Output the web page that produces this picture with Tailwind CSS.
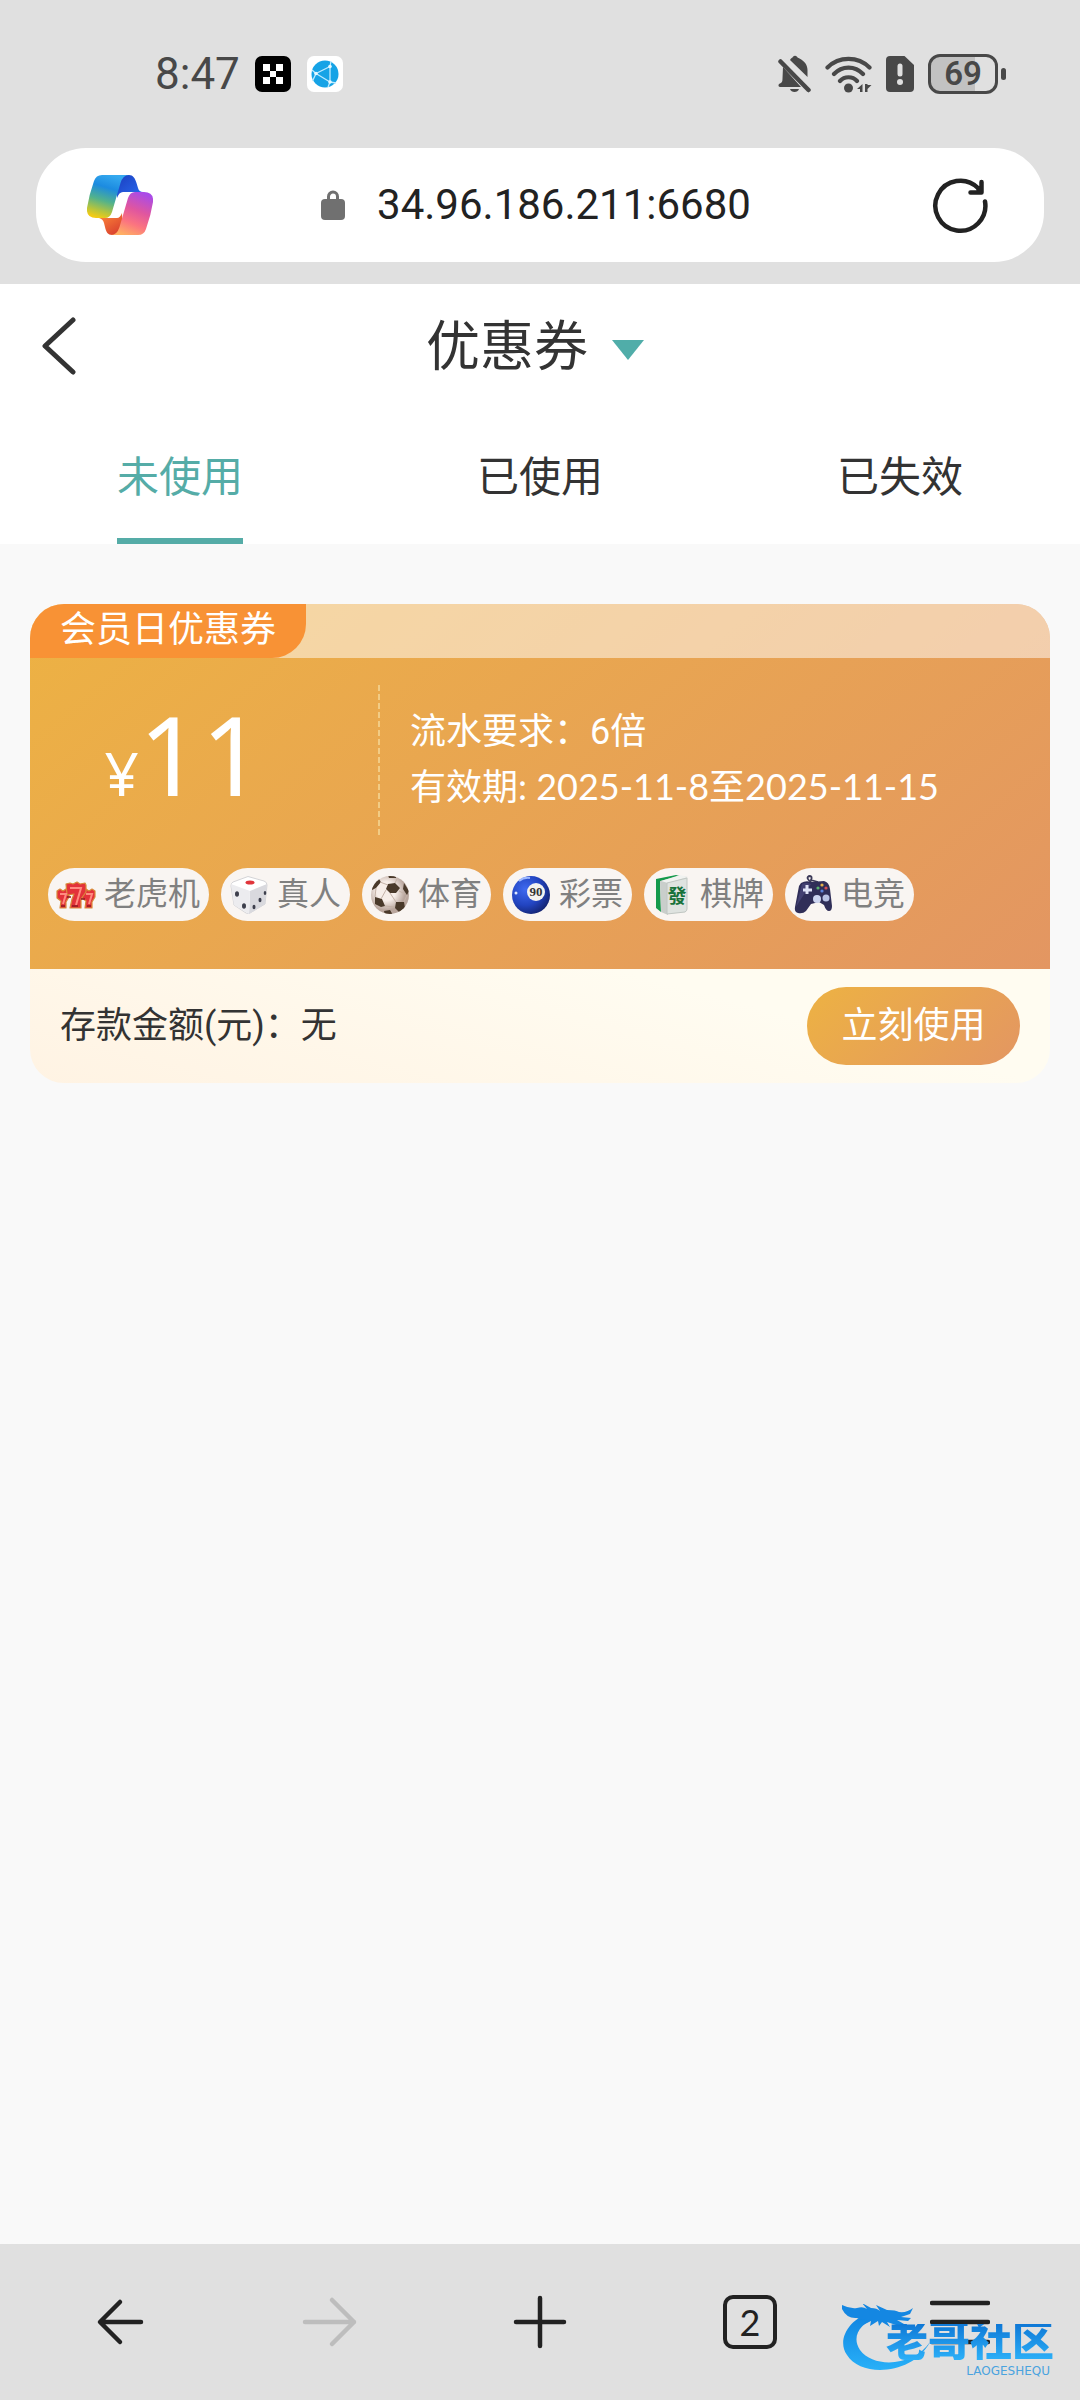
<!DOCTYPE html>
<html lang="zh-CN">
<head>
<meta charset="utf-8">
<meta name="viewport" content="width=device-width, initial-scale=1">
<title>优惠券</title>
<script src="https://cdn.jsdelivr.net/npm/@tailwindcss/browser@4"></script>
</head>
<body class="flex min-h-screen flex-col bg-[#f9f9f9] font-[Roboto,'Noto_Sans_CJK_SC',sans-serif] text-[#333]">

<!-- Status bar and address bar -->
<div class="bg-[#e0e0e0] px-9 pb-[22px]">
  <div class="flex h-[148px] items-center justify-between pr-[38px] pl-[119px]">
    <div class="flex items-center gap-4">
      <span class="w-[84px] text-[44px] leading-[52px] text-[#484848]">8:47</span>
      <svg class="size-9" viewBox="0 0 36 36"><rect width="36" height="36" rx="7"/><path fill="#fff" d="M8 8h7v7H8zM21 8h7v7h-7zM15 15h6v6h-6zM8 21h7v7H8zM21 21h7v7h-7z"/></svg>
      <svg class="size-9" viewBox="0 0 36 36"><rect width="36" height="36" rx="7" fill="#fff"/><circle cx="18" cy="18" r="13.5" fill="#16a3e6"/><path d="M9 17.5 23 10.500M9 17.500 23 26M23 10.500V26M9 17.500 5 14M9 17.500 5.500 25M23 10.500 24 5M23 26 21 31M23 26l6 1" fill="none" stroke="#bdeaff" stroke-width="1.300"/><circle cx="9" cy="17.500" r="1.800" fill="#e6f8ff"/><circle cx="23" cy="10.500" r="1.800" fill="#e6f8ff"/><circle cx="23" cy="26" r="1.800" fill="#e6f8ff"/></svg>
    </div>
    <div class="flex items-center gap-[14px] text-[#484848]">
      <svg class="h-[38px] w-[33px]" viewBox="0 0 33 38" fill="currentColor"><path d="M12 5c1-2 2.500-2 3-3.200 1-1.500 3-1.500 4 0 .5 1 1 1 2.500 1.800 5 2.500 8 6.500 8 11.500v7z"/><path d="M5 12l18 20H2c-2 0-2-3 0-3.500 2-1 2.500-2 2.500-5z"/><path d="M2.500 6.500 30.500 35" stroke="currentColor" stroke-width="4.500" stroke-linecap="round"/><path d="M12 34h9c-1 4-8 4-9 0z"/></svg>
      <svg class="h-[38px] w-[47px]" viewBox="0 0 47 38" fill="none" stroke="currentColor" stroke-width="4.200" stroke-linecap="round"><path d="M2.500 12.500C14 1 33 1 44.500 12.500M9 19c8-8.500 21-8.500 29 0M15 26c4.500-5 12.500-5 17 0"/><circle cx="23.500" cy="33" r="4.500" fill="currentColor" stroke="none"/><path d="M37.500 29v8h-2.500v-3h-3zM40 29v8h2.500v-3l4-4h-4v-1z" fill="currentColor" stroke="none"/></svg>
      <svg class="h-[38px] w-7" viewBox="0 0 28 38"><path fill="currentColor" d="M4 1h14.500L28 10v23q0 4-4 4H4q-4 0-4-4V5q0-4 4-4z"/><path stroke="#e0e0e0" stroke-width="5" stroke-linecap="round" d="M14 11v8"/><circle cx="14" cy="27" r="3" fill="#e0e0e0"/></svg>
      <div class="flex items-center gap-[3px]">
        <div class="h-10 w-[70px] rounded-xl border-[3px] border-current bg-[linear-gradient(90deg,#c2c2c2_68%,#e0e0e0_68%)] text-center text-[33px] leading-[34px] font-semibold">69</div>
        <div class="h-3 w-[5px] rounded-full bg-current"></div>
      </div>
    </div>
  </div>

  <form class="flex h-[114px] items-center rounded-[50px] bg-white px-12">
    <button type="button" aria-label="Copilot" class="flex w-[72px] justify-center">
      <svg class="h-[60px] w-[66px]" viewBox="0 0 66 60">
        <defs>
          <linearGradient id="a" x1=".6" y1="0" x2=".3" y2="1"><stop stop-color="#35a9ef"/><stop offset=".3" stop-color="#1c8be0"/><stop offset=".6" stop-color="#52b28c"/><stop offset=".85" stop-color="#b9c53a"/><stop offset="1" stop-color="#f3cb14"/></linearGradient>
          <linearGradient id="b" x1=".7" y1="0" x2=".3" y2="1"><stop stop-color="#a94be8"/><stop offset=".4" stop-color="#e0569f"/><stop offset=".7" stop-color="#fb7480"/><stop offset="1" stop-color="#ffb063"/></linearGradient>
          <linearGradient id="c" x1="0" y1="0" x2="1" y2="1"><stop stop-color="#1b3fc0"/><stop offset="1" stop-color="#2a6cf0"/></linearGradient>
          <linearGradient id="d" x1="0" y1="0" x2=".7" y2="1"><stop stop-color="#ff8c3a"/><stop offset="1" stop-color="#d9402f"/></linearGradient>
        </defs>
        <path fill="url(#c)" d="M30 0h12c4 0 6 3 7.500 8l1.500 5q1 4 5 4H36q-4 0-6 6z"/>
        <path fill="url(#d)" d="M36 60H25c-4 0-6-3-7-8l-1-4q-1-4-5-5h18q3 0 5-5z"/>
        <path fill="url(#a)" d="M15 0h27q-6 0-8.500 8L25 37q-2 6-7 6H9Q-1 43 0 33 2 20 7 6q2-6 8-6z"/>
        <path fill="url(#b)" d="M51 60H24q6 0 8.500-8L41 23q2-6 7-6h9q10 0 9 10-2 13-7 27-2 6-8 6z"/>
      </svg>
    </button>
    <label class="flex flex-1 items-center justify-center gap-8 pr-2">
      <svg class="h-[30px] w-6" viewBox="0 0 24 30" role="img" aria-label="网址"><rect y="9" width="24" height="21" rx="4" fill="#707070"/><path d="M7.500 10V6.500a4.500 4.500 0 0 1 9 0V10" fill="none" stroke="#707070" stroke-width="3"/></svg>
      <input type="text" value="34.96.186.211:6680" class="field-sizing-content text-[42px] leading-[50px] text-[#222] outline-none">
    </label>
    <button type="button" aria-label="刷新" class="flex w-[72px] justify-center">
      <svg class="size-[58px]" viewBox="0 0 58 58" fill="none" stroke="#222" stroke-width="4.500" stroke-linecap="round" stroke-linejoin="round"><path d="M54 25.500A25 25 0 1 1 47 12l2 4.500M50.500 6v10.500H39.500"/></svg>
    </button>
  </form>
</div>

<!-- Page header -->
<header class="bg-white">
  <div class="grid h-[124px] grid-cols-[80px_1fr_90px] items-center">
    <button type="button" aria-label="返回" class="flex justify-end pr-[3px]">
      <svg class="h-[58px] w-9" viewBox="0 0 36 58" fill="none" stroke="#333" stroke-width="5" stroke-linecap="round" stroke-linejoin="round"><path d="M32 3 4 29l28 26"/></svg>
    </button>
    <h1 class="flex justify-center">
      <button type="button" class="flex items-center gap-6 pt-1 text-[54px] leading-[64px]">优惠券
        <svg class="mt-1 h-5 w-8" viewBox="0 0 32 20"><path fill="#50ada9" d="M0 0h32L16 20z"/></svg>
      </button>
    </h1>
  </div>
  <nav class="grid h-[136px] grid-cols-3 pt-1 text-[42px] leading-[132px]">
    <a href="#unused" aria-current="page" class="relative justify-self-center text-[#55aca7] after:absolute after:inset-x-0 after:bottom-0 after:h-[6px] after:bg-[#55aca7]">未使用</a>
    <a href="#used" class="justify-self-center">已使用</a>
    <a href="#expired" class="justify-self-center">已失效</a>
  </nav>
</header>

<!-- Coupons -->
<main class="flex-1 px-[30px] pt-[60px]">
  <article class="overflow-hidden rounded-[34px] text-[36px]">
    <div class="bg-[linear-gradient(140deg,#edb243,#e39662)] text-white">
      <div class="flex h-[54px] bg-white/50">
        <h2 class="rounded-br-[34px] bg-[#f89235] px-[30px] leading-[53px]">会员日优惠券</h2>
      </div>
      <div class="flex h-[206px] items-center">
        <div class="w-[348px] pt-1 pr-[40px] text-center font-['Noto_Sans'] text-[109px] leading-[120px]"><span class="text-[60px]">¥</span>11</div>
        <div class="h-[152px] w-[2px] bg-[repeating-linear-gradient(180deg,#f2cc85_0px,#f2cc85_6px,transparent_6px,transparent_9px)]"></div>
        <div class="pb-1 pl-[30px] leading-[54px]">
          <p>流水要求：6倍</p>
          <p class="font-[Lato,'Noto_Sans_CJK_SC',sans-serif]">有效期: 2025-11-8至2025-11-15</p>
        </div>
      </div>
      <ul class="flex h-[105px] flex-wrap items-start gap-3 pt-1 pl-[18px] text-[32px] leading-[53px] text-[#808080]">
        <li class="flex h-[53px] items-center gap-2 rounded-full bg-[#f9f5f2] pr-[9px] pl-2">
          <svg class="size-10" viewBox="0 0 40 40"><g fill="#e3323a" stroke="#d98a3a" stroke-width="1.200" stroke-linejoin="round"><path d="M1 16l3-2 3 2 3-2 3 2v6l-3 5v6H4l1-7-4-3zM27 16l3-2 3 2 3-2 3 2v6l-3 5v6h-7l1-7-4-3z"/><path d="M10 9l4-1 3 1 4-2 3 2 5-1 1 2v7l-5 7v9H14l2-9 2-5-7 1z"/></g><path d="M4 19h6l-3 10M30 19h6l-3 10M14 13h11l-5 17" fill="none" stroke="#ff8a80" stroke-width="2"/><path d="M11 22h4M25 24h4M5 31h4M16 31h6M31 31h4" stroke="#8f1820" stroke-width="1.500"/></svg>老虎机
        </li>
        <li class="flex h-[53px] items-center gap-2 rounded-full bg-[#f9f5f2] pr-[9px] pl-2">
          <svg class="size-10" viewBox="0 0 40 40"><path fill="#fff" stroke="#d4d4d7" d="M19 1.500 35 6q3 1 3 4l-2 19-15 9q-2 1-4 0L5 30 2 11q0-3 2-4z"/><path fill="#d9d9de" d="M21 16 38 9l-2 20-16 10z"/><path fill="#ececef" d="M21 16 2 9l3 21 15 9z"/><ellipse cx="21" cy="7.500" rx="4.500" ry="2" fill="#e0353b"/><g fill="#3d3f4c"><ellipse cx="8" cy="19" rx="2" ry="2.800"/><ellipse cx="15" cy="31" rx="2" ry="2.800"/><ellipse cx="25" cy="32" rx="1.500" ry="2.200"/><ellipse cx="31" cy="25" rx="1.500" ry="2.200"/><ellipse cx="36" cy="18" rx="1.300" ry="2"/></g></svg>真人
        </li>
        <li class="flex h-[53px] items-center gap-2 rounded-full bg-[#f9f5f2] pr-[9px] pl-2">
          <svg class="size-10" viewBox="0 0 40 40"><defs><radialGradient id="s" cx=".4" cy=".4"><stop offset=".5" stop-color="#f7eee9"/><stop offset="1" stop-color="#b9a69d"/></radialGradient><clipPath id="sc"><circle cx="20" cy="20" r="19"/></clipPath></defs><circle cx="20" cy="20" r="19" fill="url(#s)"/><g clip-path="url(#sc)" fill="#4a3a2b"><path d="m18 9 7-1 5 5-4 5h-6l-4-4zM5 22l7 2 3 7-4 1-6-3zM26 27l8 0 1 6-6 4-4-4zM1 8l8-4 2 3-5 6-4 2zM34 8l5 8-2 4-4-6zM14 36l6-1 3 5h-8zM18 0l8 0 0 3-7 0z"/><path d="m10 7 8 3M6 13l-1 9M16 15l-5 9M20 18l6 9M15 31l10 1M29 16l6 3M34 27l3-7M25 8l2-4" fill="none" stroke="#c4b2a7"/></g></svg>体育
        </li>
        <li class="flex h-[53px] items-center gap-2 rounded-full bg-[#f9f5f2] pr-[9px] pl-2">
          <svg class="size-10" viewBox="0 0 40 40"><defs><radialGradient id="p" cx=".35" cy=".35" r=".7"><stop stop-color="#3f6af0"/><stop offset=".6" stop-color="#2244c0"/><stop offset="1" stop-color="#142574"/></radialGradient></defs><circle cx="20" cy="20" r="19" fill="url(#p)"/><circle cx="25" cy="17" r="9" fill="#f4f3ef"/><path d="M8 6q5-4 11-3" stroke="#9db8ff" stroke-width="2" fill="none"/><circle cx="5" cy="18" r="1.500" fill="#dfe8ff"/><text x="25" y="21" font-family="Liberation Serif" font-size="13" font-weight="bold" text-anchor="middle" fill="#333">90</text></svg>彩票
        </li>
        <li class="flex h-[53px] items-center gap-2 rounded-full bg-[#f9f5f2] pr-[9px] pl-2">
          <svg class="size-10" viewBox="0 0 40 40"><path fill="#149a4c" d="M4 4 24 0l4 1-20 6 1 30-5-4z"/><path fill="#c9cecb" d="M8 6 27 1l9 1-20 6v32l-7-3z"/><path fill="#f0f2f0" d="M9 6 28 0l8 2-20 6z"/><path fill="#dfe3e0" stroke="#c0c6c2" d="m15 8 20-5v31q0 2-2 3l-18 2z"/><text x="25" y="28" font-family="Noto Sans CJK TC" font-size="19" font-weight="bold" text-anchor="middle" fill="#17723a">發</text></svg>棋牌
        </li>
        <li class="flex h-[53px] items-center gap-2 rounded-full bg-[#f9f5f2] pr-[9px] pl-2">
          <svg class="size-10" viewBox="0 0 40 40"><path d="M19 8q-7-5-3-7 4 0 2 4l7 2" fill="none" stroke="#3c3a58" stroke-width="1.800"/><path fill="#302e58" d="M8 8q5-3 10-1l13-1q5 1 6 8l2 17q0 5-3 5-3 0-5-6l-5-3-8 2-5 7q-3 3-8 2-4-1-3-6L6 11z"/><path fill="#55528a" d="M9 9q4-2 9 0l-10 15-5 8z" opacity=".5"/><path d="M14 10v9M10 15h9" stroke="#dfe2f5" stroke-width="3"/><circle cx="24" cy="24" r="4" fill="#cdd5f0"/><circle cx="33" cy="23" r="3.500" fill="#b9c2e4"/><circle cx="29" cy="10" r="1.600" fill="#e4b04a"/><circle cx="29" cy="16" r="1.600" fill="#5f84db"/><circle cx="33" cy="13" r="1.600" fill="#d84f55"/><circle cx="25" cy="13" r="1.600" fill="#58b16d"/></svg>电竞
        </li>
      </ul>
    </div>
    <div class="flex h-[114px] items-center justify-between bg-[linear-gradient(15deg,#fff3e3,#fffcf1_70%)] px-[30px]">
      <p class="leading-[54px]">存款金额(元)：无</p>
      <button type="button" class="h-[78px] w-[213px] rounded-full bg-[linear-gradient(135deg,#edb243,#e39662)] leading-[74px] text-white">立刻使用</button>
    </div>
  </article>
</main>

<!-- Browser toolbar -->
<footer class="relative h-[156px] bg-[#e0e0e0] px-[15px]">
  <div class="grid h-[156px] grid-cols-5 items-center justify-items-center">
    <button type="button" aria-label="后退"><svg class="size-[60px]" viewBox="0 0 60 60" fill="none" stroke="#222" stroke-width="4.500" stroke-linecap="round" stroke-linejoin="round"><path d="M51 30H11M30 10 10 30l20 20"/></svg></button>
    <button type="button" aria-label="前进" disabled><svg class="size-[60px]" viewBox="0 0 60 60" fill="none" stroke="#bdbdbd" stroke-width="4.500" stroke-linecap="round" stroke-linejoin="round"><path d="M5 30h49M32 8l22 22-22 22"/></svg></button>
    <button type="button" aria-label="新建标签页"><svg class="size-[60px]" viewBox="0 0 60 60" fill="none" stroke="#222" stroke-width="4.500" stroke-linecap="round"><path d="M30 6v48M6 30h48"/></svg></button>
    <button type="button" aria-label="标签页 2" class="size-[54px] rounded-[10px] border-4 border-[#222] font-[Lato] text-[36px] leading-[44px] text-[#222]">2</button>
    <button type="button" aria-label="菜单"><svg class="size-[60px]" viewBox="0 0 60 60" stroke="#222" stroke-width="4.500" stroke-linecap="round"><path d="M2 11h56M2 30h56M2 50h56"/></svg></button>
  </div>

  <!-- Community watermark over the toolbar -->
  <div class="absolute right-[8px] bottom-[20px] h-[76px] w-[230px]">
    <svg class="absolute top-0 left-0 h-[76px] w-[100px]" viewBox="0 0 100 76">
      <defs><linearGradient id="w" x1="0" y1="0" x2="0" y2="1"><stop stop-color="#0f83e0"/><stop offset="1" stop-color="#28b0f8"/></linearGradient></defs>
      <path fill="url(#w)" d="M30 9C8 13-6 36 5 51c14 23 66 20 83-13C72 62 32 65 18 46 9 33 18 18 36 14z"/>
      <path fill="#1487e2" d="M0 1q8 4 15 3 6-2 10 1l-5-6 9 5q6 0 9 3l-4-6 11 5q9 0 12 2 8 1 14-4l-3 6-9 3 10 1-3 3-11-1 7 4-5 2-12-4 3 5-8-5-3 4-1-5-8 5 1-5-8 4 4-6q-6 2-10-1-10 1-15-9z"/>
    </svg>
    <div class="absolute top-[20px] left-[44px] w-[180px]">
      <p class="bg-[linear-gradient(180deg,#0f78d6,#2cb0f8)] bg-clip-text text-[42px] leading-[36px] font-black text-transparent">老哥社区</p>
      <p class="mt-1 pr-4 text-right font-['DejaVu_Sans'] text-[12px] leading-[14px] text-[#4aa3df]">LAOGESHEQU</p>
    </div>
  </div>
</footer>
</body>
</html>
